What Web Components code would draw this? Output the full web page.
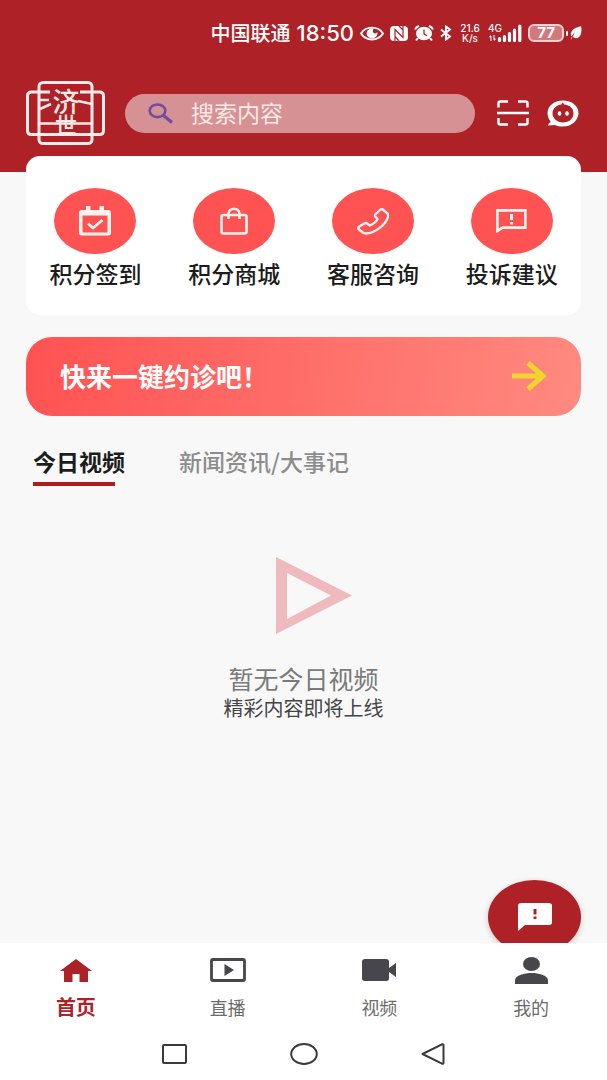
<!DOCTYPE html>
<html lang="zh-CN">
<head>
<meta charset="utf-8">
<meta name="viewport" content="width=device-width, initial-scale=1">
<title>济世</title>
<style>
  :root {
    --brand: #ad2127;
    --coral: #ff5252;
    --page: #f8f8f8;
    --ink: #1c1c1c;
    --gutter: 26px;
  }
  body {
    margin: 0;
    background: var(--page);
    color: var(--ink);
    font-family: "Noto Sans CJK SC", sans-serif;
  }
</style>
</head>
<body>
<home-page></home-page>

<script>
const define = (name, html, setup) => customElements.define(name, class extends HTMLElement {
  constructor() {
    super();
    this.attachShadow({ mode: 'open' }).innerHTML = html;
  }
  connectedCallback() {
    if (setup) setup(this, this.shadowRoot);
  }
});

/* name: [viewBox, width, height, markup] */
const ICONS = {
  eye: ['0 0 24 15', 24, 15, '<path d="M1 7.500C6-.4 18-.4 23 7.500C18 15.400 6 15.400 1 7.500z" fill="none" stroke="currentColor" stroke-width="1.900"/><path d="M12 2.500a5.400 5 0 1 0 5.400 5c0-.5-.1-1-.3-1.500a2.200 2 0 0 1-4.200-1.200c0-.7.2-1.300.7-2.100A5 5 0 0 0 12 2.500z" fill="currentColor"/>'],
  nfc: ['0 0 18 17', 18, 17, '<rect x="0" y="1" width="18" height="15" rx="4" fill="currentColor"/><path d="M5 16V4.500l8 8V1M9 1l4 4M5 11.500l4 4.500" fill="none" stroke="#ad2127" stroke-width="1.200"/>'],
  alarm: ['0 0 20 16', 20, 16, '<ellipse cx="10" cy="8.500" rx="8" ry="6.800" fill="currentColor"/><path d="M1 4.500Q2 2 5 1M19 4.500Q18 2 15 1M4 13l-2 2.500M16 13l2 2.500" fill="none" stroke="currentColor" stroke-width="2"/><path d="M10 4.500v4.300l3 2" fill="none" stroke="#ad2127" stroke-width="1.300"/>'],
  bluetooth: ['0 0 12 16', 12, 16, '<path d="M1 4.500l9 7L6 14.500v-13l4 3-9 7" fill="none" stroke="currentColor" stroke-width="1.900"/>'],
  signal: ['0 0 34 18', 34, 18, '<path d="M3 12v5M6 11v5" stroke="currentColor" stroke-width="1"/><path d="M1 13l2-2v3zM8 15l-2 2v-3z" fill="currentColor"/><path d="M11.500 14.500v2M16.500 12.500v4M21.500 9.500v7M26.500 6v10.500M31.800 2v14.500" stroke="currentColor" stroke-width="3.200" stroke-linecap="round"/>'],
  leaf: ['0 0 12 14', 12, 14, '<path d="M11 .5C4 2 0 5 1.500 10l3.300-4.500L3.200 11C9 14 12 9 11 .5zM2 10.500L1 13.500" fill="currentColor" stroke="currentColor" stroke-width=".5"/>'],
  search: ['0 0 26 21', 26, 21, '<ellipse cx="9.500" cy="7.800" rx="7.800" ry="6.300" fill="none" stroke="currentColor" stroke-width="2.600"/><path d="M15.500 12.500l8.500 7" stroke="currentColor" stroke-width="3.200"/>'],
  scan: ['0 0 32 26', 32, 26, '<path d="M1.500 7.500V3q0-1.500 2-1.500H11M21 1.500h7.500q2 0 2 1.500v4.500M1.500 18v5q0 1.500 2 1.500H11M21 24.500h7.500q2 0 2-1.500v-5M0 13h32" fill="none" stroke="currentColor" stroke-width="2.400"/>'],
  chat: ['0 0 32 27', 32, 27, '<path fill="currentColor" fill-rule="evenodd" d="M16 .5C25 .5 31.500 6 31.500 13S25 26.500 16 26.500c-3 0-6-.5-8-1.500L1 25.500l1-2.500c1 0 2-.8 1.500-1.500C1.500 19 .5 16 .5 13 .5 6 7 .5 16 .5zM17 4.500l-1-2C15 3 14.500 4 14.500 4.600 9 5.200 5.500 9 5.500 13.500S10 22.500 16 22.500 26.500 18.500 26.500 13.500 23 5 17 4.500z"/><ellipse cx="12.500" cy="13.500" rx="1.800" ry="2.300" fill="currentColor"/><ellipse cx="20" cy="13.500" rx="1.800" ry="2.300" fill="currentColor"/>'],
  checkin: ['0 0 32 30', 32, 30, '<path fill="currentColor" fill-rule="evenodd" d="M7 0h4.500v4h9V0H25v4h4q3 0 3 2.500V27q0 2.500-3 2.500H3Q0 29.500 0 27V6.500Q0 4 3 4h4zM3.500 9.500V26.500h25V9.500z"/><path d="M9 17.500l5 4.500 9.500-8" fill="none" stroke="currentColor" stroke-width="2.800"/>'],
  bag: ['0 0 28 28', 28, 28, '<rect x="1.500" y="8" width="25" height="18.500" rx="2" fill="none" stroke="currentColor" stroke-width="2.600"/><path d="M8.500 12V7C8.500 0 19.500 0 19.500 7v5" fill="none" stroke="currentColor" stroke-width="2.600"/>'],
  phone: ['0 0 32 27', 32, 27, '<path d="M23.500 1.500q1.500-.8 2.800.3l4 3.500q1.500 1.500.5 4C28.500 17 18 25 9 25.500q-2 0-3.500-1.200L2 21.500q-1.500-1.500.3-3l5-3q1.700-1 3.200.3l2.200 1.700c3.500-1.400 6.300-3.500 8-6.500l-2.200-2.200q-1.300-1.500.3-2.800z" fill="none" stroke="currentColor" stroke-width="2.400" stroke-linejoin="round"/>'],
  feedback: ['0 0 31 24', 31, 24, '<path d="M1.400 1.400h28v17.200H6.500L1.400 22z" fill="none" stroke="currentColor" stroke-width="2.600"/><path d="M15.500 5v6M15.500 13v2.500" stroke="currentColor" stroke-width="3"/>'],
  feedbackFill: ['0 0 34 28', 34, 28, '<path fill="currentColor" fill-rule="evenodd" d="M3.500 0h27Q34 0 34 2.500v17q0 2.500-3.500 2.500H7L0 28V2.500Q0 0 3.500 0zM15.500 6v5.500h3V6zM15.500 13.500V16h3v-2.500z"/>'],
  arrow: ['0 0 36 32', 36, 32, '<path d="M1 16h31M17 3l15 13-15 13" fill="none" stroke="currentColor" stroke-width="5"/>'],
  play: ['0 0 76 77', 76, 77, '<path fill="currentColor" fill-rule="evenodd" d="M0 0l76 38.500L0 77zM11 16v46l44-23.500z"/>'],
  home: ['0 0 32 23', 32, 23, '<path fill="currentColor" d="M16 0l16 12h-4v11h-8.500v-8h-7v8H4V12H0z"/>'],
  live: ['0 0 36 24', 36, 24, '<rect x="1.500" y="1.500" width="33" height="21" rx="1.500" fill="none" stroke="currentColor" stroke-width="2.800"/><path fill="currentColor" d="M14.500 6l9.500 6-9.500 6z"/>'],
  video: ['0 0 34 22', 34, 22, '<path fill="currentColor" d="M3 0h21q3 0 3 2.500V9l7-5v14l-7-5v6.500q0 2.500-3 2.500H3q-3 0-3-2.500v-17Q0 0 3 0z"/>'],
  person: ['0 0 33 27', 33, 27, '<ellipse cx="16.500" cy="7" rx="8.500" ry="7" fill="currentColor"/><path fill="currentColor" d="M0 27v-3.500C0 18 10 16 16.500 16S33 18 33 23.500V27z"/>'],
  square: ['0 0 25 20', 25, 20, '<rect x="1" y="1" width="23" height="18" rx="1" fill="none" stroke="currentColor" stroke-width="2"/>'],
  circle: ['0 0 28 22', 28, 22, '<ellipse cx="14" cy="11" rx="12.800" ry="10" fill="none" stroke="currentColor" stroke-width="2"/>'],
  back: ['0 0 24 22', 24, 22, '<path d="M1.500 11L21 1.300q1.500-.5 1.500 1v17.400q0 1.500-1.500 1z" fill="none" stroke="currentColor" stroke-width="2" stroke-linejoin="round"/>']
};

define('app-icon', `<style>:host{display:inline-flex;flex:none}svg{display:block}</style>`, (el, root) => {
  const [box, w, h, markup] = ICONS[el.getAttribute('name')];
  root.innerHTML += `<svg viewBox="${box}" width="${w}" height="${h}" aria-hidden="true">${markup}</svg>`;
});

define('status-bar', `
<style>
  :host { display: flex; justify-content: flex-end; align-items: center; gap: 6px; height: 66px; padding: 0 25px; color: #fff; }
  .carrier { font-size: 20px; line-height: 24px; font-weight: 500; }
  time { font: 500 22px/24px Inter, sans-serif; }
  .rate { display: grid; min-width: 24px; font: 500 10px/10px Inter, sans-serif; text-align: center; }
  .cell { position: relative; display: flex; }
  .cell span { position: absolute; top: 0; left: 0; font: 500 10px/8px Inter, sans-serif; }
  .battery { display: flex; align-items: center; gap: 2px; }
  .level { box-sizing: border-box; width: 36px; height: 18px; border: 2px solid #f3cfd0; border-radius: 6px; background: #d07a7e; font: 700 15px/14px Inter, sans-serif; text-align: center; }
  .tip { width: 2px; height: 5px; border-radius: 1px; background: #fff; }
</style>
<span class="carrier">中国联通</span>
<time>18:50</time>
<app-icon name="eye"></app-icon>
<app-icon name="nfc"></app-icon>
<app-icon name="alarm"></app-icon>
<app-icon name="bluetooth"></app-icon>
<span class="rate"><span>21.6</span><span>K/s</span></span>
<span class="cell"><span>4G</span><app-icon name="signal"></app-icon></span>
<span class="battery"><span class="level">77</span><span class="tip"></span><app-icon name="leaf"></app-icon></span>`);

define('brand-logo', `
<style>
  :host { display: block; flex: none; color: #ffeaea; }
  svg { display: block; }
  text { font-family: "Noto Sans CJK SC", sans-serif; font-weight: 500; fill: currentColor; }
</style>
<svg width="79" height="65" viewBox="0 0 79 65" role="img" aria-label="济世">
  <g fill="none" stroke="currentColor" stroke-width="3">
    <rect x="13" y="1.500" width="53" height="61" rx="4"/>
    <path d="M24 11H5.500Q1.500 11 1.500 15V49.500q0 4 4 4h68q4 0 4-4V15q0-4-4-4H54"/>
    <path d="M13 42.500H66M13 19h10M14 28l11-5M52 20l14 3" stroke-width="2.500"/>
  </g>
  <text x="40" y="31" font-size="27" text-anchor="middle">济</text>
  <text x="40" y="52" font-size="22" text-anchor="middle">世</text>
</svg>`);

define('search-box', `
<style>
  :host { display: block; flex: 1; min-width: 0; }
  label { display: flex; align-items: center; gap: 17px; height: 39px; padding: 0 23px; border-radius: 20px; background: #d69194; }
  app-icon { color: #724c9f; }
  input { flex: 1; min-width: 0; padding: 0 0 3px; border: 0; outline: 0; background: none; font: 400 23px/32px "Noto Sans CJK SC", sans-serif; color: #fff; }
  input::placeholder { color: #fbe9e6; opacity: 1; }
</style>
<label><app-icon name="search"></app-icon><input type="search" placeholder="搜索内容" aria-label="搜索内容"></label>`);

define('app-header', `
<style>
  :host { display: block; padding-bottom: 26px; background: var(--brand); }
  .row { display: flex; align-items: center; gap: 20px; padding: 15px var(--gutter) 0; height: 65px; }
  .tools { display: flex; gap: 18px; padding-left: 2px; padding-right: 2px; }
  button { display: flex; padding: 0; border: 0; background: none; color: #fff; }
</style>
<status-bar></status-bar>
<div class="row">
  <brand-logo></brand-logo>
  <search-box></search-box>
  <div class="tools">
    <button aria-label="扫一扫"><app-icon name="scan"></app-icon></button>
    <button aria-label="消息"><app-icon name="chat"></app-icon></button>
  </div>
</div>`);

define('quick-action', `
<style>
  :host { display: block; flex: 1; }
  button { display: grid; justify-items: center; gap: 3px; width: 100%; padding: 0; border: 0; background: none; color: var(--ink); font: 500 23px/32px "Noto Sans CJK SC", sans-serif; white-space: nowrap; }
  .disc { display: grid; place-items: center; width: 82px; height: 66px; border-radius: 50%; background: var(--coral); color: #fff3f0; }
</style>
<button><span class="disc"><slot name="icon"></slot></span><slot></slot></button>`);

define('quick-panel', `
<style>
  :host { display: flex; box-sizing: border-box; min-height: 159px; padding: 32px 0 24px; border-radius: 14px; background: #fff; }
</style>
<slot></slot>`);

define('promo-banner', `
<style>
  :host { display: block; }
  a { display: flex; justify-content: space-between; align-items: center; box-sizing: border-box; height: 79px; padding: 0 34px 2px; border-radius: 26px; background: linear-gradient(100deg, #ff5252, #ff8a80); color: #fff; font-size: 26px; line-height: 36px; font-weight: 700; text-decoration: none; }
  app-icon { color: #efd52c; }
</style>
<a href="#booking"><span><slot></slot></span><app-icon name="arrow"></app-icon></a>`);

define('feed-tabs', `
<style>
  :host { display: block; padding: 0 7px; }
  div { display: flex; gap: 54px; }
  button { display: grid; gap: 5px; padding: 0; border: 0; background: none; color: #8c8c8c; font: 500 23px/32px "Noto Sans CJK SC", sans-serif; white-space: nowrap; align-content: start; }
  [aria-selected=true] { color: var(--ink); font-weight: 700; }
  [aria-selected=true]::after { content: ""; width: 82px; height: 4px; background: #b01c1e; }
</style>
<div role="tablist">
  <button role="tab" aria-selected="true">今日视频</button>
  <button role="tab" aria-selected="false">新闻资讯/大事记</button>
</div>`);

define('empty-state', `
<style>
  :host { display: grid; justify-items: center; }
  app-icon { padding-left: 20px; color: #efbabd; }
  h2 { margin: 27px 0 0; font-size: 25px; line-height: 34px; font-weight: 400; color: #7a7a7a; }
  p { margin: 0; font-size: 20px; line-height: 26px; color: #444; }
</style>
<app-icon name="play"></app-icon>
<h2><slot name="title"></slot></h2>
<p><slot></slot></p>`);

define('feedback-fab', `
<style>
  :host { position: absolute; right: var(--gutter); bottom: -11px; }
  button { display: grid; place-items: center; width: 93px; height: 74px; padding: 0; border: 0; border-radius: 50%; background: var(--brand); color: #fff; box-shadow: 0 2px 6px #0003; }
</style>
<button aria-label="反馈"><app-icon name="feedbackFill"></app-icon></button>`);

define('nav-item', `
<style>
  :host { display: block; flex: 1; }
  a { display: grid; justify-items: center; gap: 9px; color: #6c6c6c; font-size: 18px; line-height: 28px; text-decoration: none; }
  .icon { display: grid; place-items: center; height: 28px; color: #46464c; }
  :host([active]) a { color: var(--brand); font-size: 20px; font-weight: 700; }
  :host([active]) .icon { color: var(--brand); }
</style>
<a href="#"><span class="icon"><slot name="icon"></slot></span><slot></slot></a>`);

define('bottom-nav', `
<style>
  :host { position: sticky; bottom: 0; z-index: 1; display: block; background: #fff; }
  nav { display: flex; padding-top: 13px; height: 72px; }
  .system { display: flex; justify-content: center; align-items: center; gap: 103px; height: 52px; }
  button { display: flex; padding: 0; border: 0; background: none; color: #3a3a3a; }
</style>
<nav><slot></slot></nav>
<div class="system">
  <button aria-label="最近任务"><app-icon name="square"></app-icon></button>
  <button aria-label="主屏幕"><app-icon name="circle"></app-icon></button>
  <button aria-label="返回"><app-icon name="back"></app-icon></button>
</div>`);

define('home-page', `
<style>
  :host { display: flex; flex-direction: column; min-height: 100vh; }
  main { position: relative; flex: 1; padding: 0 var(--gutter); }
  quick-panel { margin-top: -16px; }
  promo-banner { margin-top: 22px; }
  feed-tabs { margin-top: 29px; }
  empty-state { margin: 71px 0 120px; }
</style>
<app-header></app-header>
<main>
  <quick-panel>
    <quick-action><app-icon slot="icon" name="checkin"></app-icon>积分签到</quick-action>
    <quick-action><app-icon slot="icon" name="bag"></app-icon>积分商城</quick-action>
    <quick-action><app-icon slot="icon" name="phone"></app-icon>客服咨询</quick-action>
    <quick-action><app-icon slot="icon" name="feedback"></app-icon>投诉建议</quick-action>
  </quick-panel>
  <promo-banner>快来一键约诊吧！</promo-banner>
  <feed-tabs></feed-tabs>
  <empty-state><span slot="title">暂无今日视频</span>精彩内容即将上线</empty-state>
  <feedback-fab></feedback-fab>
</main>
<bottom-nav>
  <nav-item active><app-icon slot="icon" name="home"></app-icon>首页</nav-item>
  <nav-item><app-icon slot="icon" name="live"></app-icon>直播</nav-item>
  <nav-item><app-icon slot="icon" name="video"></app-icon>视频</nav-item>
  <nav-item><app-icon slot="icon" name="person"></app-icon>我的</nav-item>
</bottom-nav>
`);
</script>
</body>
</html>
